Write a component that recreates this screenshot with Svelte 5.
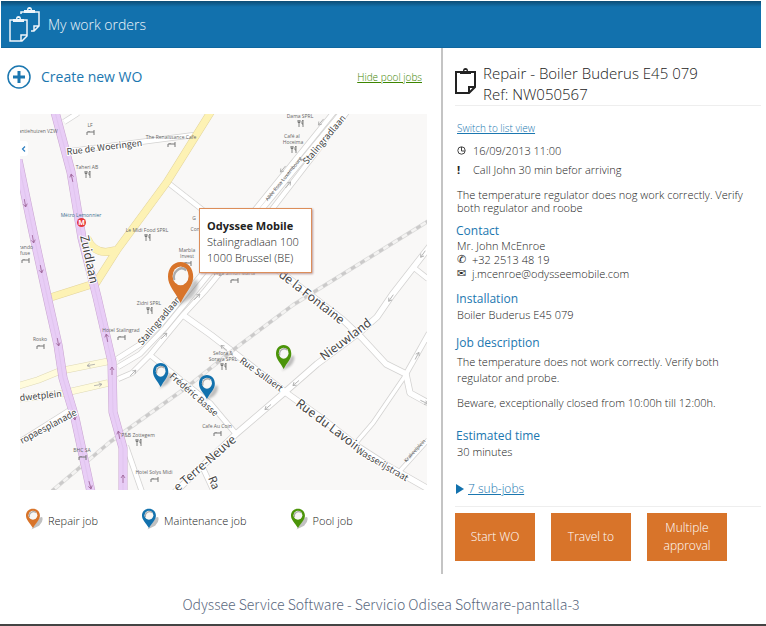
<script>
  const roads = [
    { w: 5, d: 'M64 122L78 113' },
    { w: 5, d: 'M71 151L194 135' },
    { w: 5, d: 'M167 182L204 211' },
    { w: 5, d: 'M117 359L139 345L160 325L250 216L334 112' },
    { w: 5, d: 'M118 367L140 354L165 328L258 214L342 112' },
    { w: 5, d: 'M118 379L132 373L150 355L183 315L205 291L270 212L347 112' },
    { w: 5, d: 'M150 355L210 403L236 434' },
    { w: 6, d: 'M183 315L211 335L285 392L320 417L357 446L388 466L430 490' },
    { w: 6, d: 'M173 494L236 434L285 392L317 364L360 332L377 317L392 295L430 246' },
    { w: 6, d: 'M270 264L343 320L362 338L386 364L406 374L410 393L430 404' },
    { w: 5, d: 'M406 374L429 333' },
    { w: 4, d: 'M405 376L373 423L355 444' },
    { w: 4, d: 'M399 472L428 440' },
    { w: 5, d: 'M413 267L428 279' },
    { w: 5, d: 'M126 446L142 492' },
    { w: 5, d: 'M202 466L214 492' },
    { w: 4, d: 'M20 441L69 410' },
  ];
  const yellow = 'M212 110L167 182L117 250L96 283L52 297M87 238Q93 252 106 252L117 250';
  const pale = 'M18 386L38 380L60 371L110 361M18 399L60 394L108 383';
  const purple = [
    'M18 160L33 232L49 305L58 345L63 378L75 418L91 492',
    'M55 112L71 172L82 238L97 297L112 362L113 412L123 448L123 492',
  ];
  const rail = 'M430 220L293 305L237 347L187 387L110 442L52 491';
  const arrows = [
    [25, 203, 170], [33, 239, 170], [41, 269, 170], [72, 178, -12], [58, 342, 170], [74, 416, 165],
    [90, 485, 165], [107, 338, -10], [112, 371, 0], [119, 435, -10], [123, 479, 0],
    [91, 365, -100], [98, 385, 80], [133, 373, 45], [164, 336, 45], [197, 297, 45],
    [283, 169, -140], [288, 185, 40], [321, 122, -140], [391, 298, -145], [423, 254, -145],
    [296, 383, -130], [268, 407, -130], [417, 356, 28], [224, 348, -50], [424, 402, 115],
  ];
  const places = [
    [38, 133, 'antiehuizen VZW', ''], [90, 127, 'LF', 'bed'], [171, 139, 'The Renaissance Cafe', 'bed'],
    [87, 169, 'Taheri AB', 'food'], [147, 232, 'Le Midi Food SPRL', 'food'], [187, 252, 'Marbla', ''],
    [187, 258, 'Invest', 'bed'], [26, 249, 'rando', ''], [25, 255, 'fuse', 'bed'], [149, 305, 'Zidni SPRL', 'food'],
    [121, 332, 'Hotel Stalingrad', 'bed'], [40, 341, 'Rosko', 'bed'], [300, 118, 'Dama SPRL', 'food'],
    [292, 138, 'Café al', ''], [293, 144, 'Hoceima', 'food'], [234, 275, 'Vega Simon Maria', 'bed'],
    [223, 355, 'Sefora &', ''], [223, 361, 'Soraya SPRL', 'food'], [217, 428, 'Cafe Au Coin', 'bed'],
    [138, 437, 'P&B Zottegem', 'food'], [82, 452, 'BHC SA', 'bed'], [154, 474, 'Hotel Solys Midi', 'bed'],
    [194, 220, 'G', ''], [196, 231, 'Com', ''],
  ];
  const streets = [
    [67, 155, -7, 9, 'Rue de Woeringen'], [80, 236, 78, 12, 'Zuidlaan'], [307, 165, -50, 9, 'Stalingradlaan'],
    [142, 346, -50, 9, 'Stalingradlaan'], [278, 276, 38, 12, 'de la Fontaine'], [324, 361, -37, 12, 'Nieuwland'],
    [239, 362, 36, 9, 'Rue Sallaert'], [295, 405, 37, 12, 'Rue du Lavoir'], [355, 452, 30, 9, 'Wasserijstraat'],
    [178, 492, -41, 12, 'e Terre-Neuve'], [169, 377, 41, 9, 'Frédéric Basse'], [20, 401, -6, 9, 'dwetplein'],
    [22, 444, -28, 9, 'ropaesplanade'], [208, 478, 68, 11, 'Ra'],
  ];
  const legend = [
    ['Repair job', '#d8742a'], ['Maintenance job', '#1271ad'], ['Pool job', '#4b9409'],
  ];
</script>

{#snippet pin(color)}
  <path class="pin-shadow" d="M7 27L15 16Q18 10 21 11Q23 16 17 22Z" />
  <path d="M9 0C3.500 0 0 4 0 9C0 14.500 5 18 9 25C13 18 18 14.500 18 9C18 4 14.500 0 9 0Z" fill={color} />
  <circle cx="9" cy="8.500" r="5.700" fill="#f8f7f5" />
  <path d="M4.500 11A5.500 5.500 0 0 1 13 5" fill="none" stroke="#aaa" stroke-width="1.500" />
{/snippet}

{#snippet clip()}
  <path d="M6 4H1V25H14L20 19V4H15M14 25V19H20" fill="none" stroke="currentColor" stroke-width="2" />
  <path d="M5 6V3H8Q8 0 10.500 0T13 3H16V6ZM9.500 2V3H11.500V2Z" fill="currentColor" fill-rule="evenodd" />
{/snippet}

<main>
  <header>
    <svg width="32" height="36" viewBox="0 0 32 36" aria-hidden="true">
      <path d="M12 7V5H17M24 5H30V19L25 24H22M25 24V19H30" fill="none" stroke="currentColor" stroke-width="1.500" />
      <path d="M15 6V3H18Q18 0 20.500 0T23 3H26V6ZM19.500 2V3H21.500V2Z" fill="currentColor" fill-rule="evenodd" />
      <g transform="translate(0 9)">
        <path d="M6 4H1V25H13L18 20V4H14M12 25V19H18" fill="none" stroke="currentColor" stroke-width="1.500" />
        <path d="M4 6V3H7Q7 0 9.500 0T12 3H15V6ZM8.500 2V3H10.500V2Z" fill="currentColor" fill-rule="evenodd" />
      </g>
    </svg>
    <h1>My work orders</h1>
  </header>

  <div class="columns">
    <section class="left">
      <div class="toolbar">
        <button class="create">
          <svg width="24" height="24" viewBox="0 0 24 24" aria-hidden="true">
            <circle cx="12" cy="12" r="11" fill="none" stroke="currentColor" stroke-width="1.500" />
            <path d="M12 6V18M6 12H18" stroke="currentColor" stroke-width="3" />
          </svg>
          Create new WO
        </button>
        <a class="hide" href="#pool">Hide pool jobs</a>
      </div>

      <div class="map">
        <svg class="map-art" viewBox="20 114 407 376" role="img" aria-label="Map">
          <rect x="20" y="114" width="407" height="376" fill="#f9f8f7" />
          <g fill="none" stroke-linejoin="round">
            {#each roads as r}<path d={r.d} stroke="#d3d2d1" stroke-width={r.w + 1} />{/each}
            {#each roads as r}<path d={r.d} stroke="#fff" stroke-width={r.w - 0.5} />{/each}
            <path d={rail} stroke="#dcdcdb" stroke-width="4" />
            <path d={rail} stroke="#f4f3f2" stroke-width="2.500" />
            <path d={rail} stroke="#cbcaca" stroke-width="3" stroke-dasharray="5 6" />
            <path d={pale} stroke="#dfd9b6" stroke-width="7" />
            <path d={pale} stroke="#fffbdc" stroke-width="6" />
            <path d={yellow} stroke="#e3d49c" stroke-width="8" />
            <path d={yellow} stroke="#fdf2b4" stroke-width="7" />
            {#each purple as d}
              <path {d} stroke="#c9a6d0" stroke-width="9" />
              <path {d} stroke="#e8cdf6" stroke-width="8" />
              <path {d} stroke="#d9bde6" stroke-width="0.500" />
            {/each}
            {#each arrows as [x, y, r], i}
              <path transform="translate({x} {y}) rotate({r})" d="M0 4V-4M-2 -1L0 -4L2 -1" stroke={i < 11 ? '#9d6598' : '#aaa'} stroke-width="0.800" />
            {/each}
          </g>
          {#each places as [x, y, label, kind]}
            <text class="place" {x} {y}>{label}</text>
            {#if kind === 'food'}
              <path transform="translate({x - 2} {y + 2})" d="M0 0V2.500H2V0M1 0V7M5 7V0Q3.500 1 4 4H5" fill="none" stroke="#666" stroke-width="0.800" />
            {:else if kind === 'bed'}
              <path transform="translate({x - 3} {y + 3})" d="M0 5V2H7M7 5V0M2 2V1" fill="none" stroke="#777" stroke-width="1" />
            {/if}
          {/each}
          {#each streets as [x, y, r, size, label]}
            <text class="street" transform="translate({x} {y}) rotate({r})" font-size={size}>{label}</text>
          {/each}
          <text class="place dark" transform="translate(285 180) rotate(-51)">Allée Rosa Luxembourg</text>
          <text class="place dark" transform="translate(416 452) rotate(-47)">Krakeelplein</text>
          <text class="place metro" x="81" y="217">Métro Lemonnier</text>
          <circle cx="81.500" cy="222.500" r="4.500" fill="#e5383b" />
          <text class="m" x="81.500" y="225">M</text>
          <path d="M20 141H25Q28 141 28 144V153Q28 156 25 156H20Z" fill="#fff" />
          <path d="M25 146.500L22.500 149L25 151.500" fill="none" stroke="#2a7ec0" stroke-width="1.200" />
          <g transform="translate(168 262) scale(1.400 1.640)">{@render pin('#d8742a')}</g>
          <g transform="translate(153 363) scale(0.850 0.960)">{@render pin('#1271ad')}</g>
          <g transform="translate(199 375) scale(0.880 0.960)">{@render pin('#1271ad')}</g>
          <g transform="translate(276 345) scale(0.850 0.960)">{@render pin('#4b9409')}</g>
        </svg>
        <div class="tooltip">
          <strong>Odyssee Mobile</strong>
          <span>Stalingradlaan 100</span>
          <span>1000 Brussel (BE)</span>
        </div>
      </div>

      <ul class="legend">
        {#each legend as [label, color]}
          <li>
            <svg width="17" height="23" viewBox="0 0 22 28" aria-hidden="true">{@render pin(color)}</svg>
            {label}
          </li>
        {/each}
      </ul>
    </section>

    <section class="right">
      <div class="title">
        <svg width="21" height="27" viewBox="0 0 21 27" aria-hidden="true">{@render clip()}</svg>
        <h2>Repair - Boiler Buderus E45 079<br />Ref: NW050567</h2>
      </div>
      <a class="switch" href="#list">Switch to list view</a>
      <div class="facts">
        <div>
          <svg width="9" height="9" viewBox="0 0 9 9" aria-hidden="true"><path d="M4.500 1V5H8M4.500 .8A3.700 3.700 0 1 0 8.200 4.500A3.700 3.700 0 0 0 4.500 .8" fill="none" stroke="#444" stroke-width="1" /></svg>
          16/09/2013 11:00
        </div>
        <div><b>!</b>Call John 30 min befor arriving</div>
      </div>
      <p class="note">The temperature regulator does nog work correctly. Verify both regulator and roobe</p>

      <h3 class="contact">Contact</h3>
      <address>
        <div>Mr. John McEnroe</div>
        <div><i>✆</i>+32 2513 48 19</div>
        <div><i>✉</i>j.mcenroe@odysseemobile.com</div>
      </address>

      <h3 class="install">Installation</h3>
      <p>Boiler Buderus E45 079</p>

      <h3 class="job">Job description</h3>
      <p class="desc">The temperature does not work correctly. Verify both regulator and probe.</p>
      <p class="beware">Beware, exceptionally closed from 10:00h till 12:00h.</p>

      <h3 class="time">Estimated time</h3>
      <p>30 minutes</p>

      <div class="sub">
        <svg width="8" height="10" viewBox="0 0 8 10" aria-hidden="true"><path d="M0 0L8 5L0 10Z" fill="#1271ad" /></svg>
        <a href="#sub">7 sub-jobs</a>
      </div>
      <div class="actions">
        <button>Start WO</button>
        <button>Travel to</button>
        <button>Multiple approval</button>
      </div>
    </section>
  </div>

  <footer>Odyssee Service Software - Servicio Odisea Software-pantalla-3</footer>
</main>

<style>
  :global(body) { margin: 0; background: #fff; }
  main { font: 300 11px/16px "Open Sans", "Noto Sans", sans-serif; color: #222; }
  h1, h2, h3, p, ul { margin: 0; padding: 0; font-weight: 300; }
  header {
    display: flex; align-items: center; gap: 7px; box-sizing: border-box; height: 47px;
    margin: 1px 5px 0 1px; padding: 2px 8px 0; color: #f0f5fa;
    background: linear-gradient(#0d4c75, #1271ad 6px); border-bottom: 1px solid #0f679f;
  }
  h1 { font-size: 14px; line-height: 20px; }
  .columns { display: grid; grid-template-columns: 443fr 318fr; margin-right: 5px; }
  .left { border-right: 2px solid #c4c4c4; }
  .toolbar { display: flex; align-items: center; justify-content: space-between; height: 58px; padding: 0 19px 0 7px; }
  button { border: 0; padding: 0; font: inherit; cursor: pointer; }
  .create { display: flex; align-items: center; gap: 10px; background: none; color: #1b77b0; font-size: 14px; font-weight: 400; }
  .hide, .switch { font-size: 10px; }
  .hide { color: #3d8500; }
  .map { position: relative; margin: 8px 14px 0 20px; }
  .map-art { display: block; width: 100%; height: auto; }
  .street { font-family: "Noto Sans CJK SC", sans-serif; font-weight: 400; fill: #444; stroke: #fff; stroke-width: 2px; paint-order: stroke; }
  .place { font: 400 5px "Open Sans", sans-serif; fill: #666; text-anchor: middle; }
  .dark { fill: #444; }
  .metro { font-size: 5px; fill: #3f7393; }
  .m { font: 700 7px "Open Sans", sans-serif; fill: #fff; text-anchor: middle; }
  .pin-shadow { fill: #777; opacity: 0.45; filter: blur(1px); }
  .tooltip {
    position: absolute; left: 44%; top: 25%; display: flex; flex-direction: column;
    padding: 9px 12px 6px 7px; background: #fff; border: 1px solid #dc8e5a; box-shadow: 1px 1px 2px #b99;
  }
  .tooltip strong { font-weight: 700; }
  .legend { display: flex; gap: 44px; margin: 16px 26px 0; list-style: none; }
  .legend li { display: flex; align-items: center; gap: 5px; height: 30px; }
  .legend svg { margin-top: -4px; }
  .right { display: flex; flex-direction: column; padding: 15px 0 13px 12px; }
  .title { display: flex; align-items: center; gap: 7px; border-bottom: 1px solid #eee; }
  .title svg { margin-top: -6px; }
  h2 { font-size: 15px; line-height: 21px; }
  .switch { align-self: flex-start; margin: 14px 2px 0; color: #1b77b0; }
  .facts { margin: 5px 2px 0; line-height: 19px; }
  .facts div { display: flex; align-items: center; gap: 7px; }
  .facts b { width: 9px; font-weight: 700; }
  p, address { margin: 0 2px; font-style: normal; }
  .note { margin-top: 9px; line-height: 13px; }
  h3 { margin: 0 1px; font-size: 12px; font-weight: 400; color: #1b77b0; }
  .contact { margin-top: 9px; }
  address { line-height: 14px; }
  address div { display: flex; }
  i { width: 15px; font: 11px/14px "DejaVu Sans", sans-serif; }
  .install { margin-top: 10px; }
  .job { margin-top: 12px; }
  .desc { margin-top: 3px; padding-right: 24px; }
  .beware { margin-top: 9px; }
  .time { margin-top: 17px; }
  .sub { display: flex; align-items: center; gap: 4px; margin: 21px 1px 0; padding-bottom: 9px; font-size: 12px; }
  .sub a { color: #1b77b0; }
  .actions { display: flex; gap: 16px; padding-top: 6px; border-top: 1px solid #eee; }
  .actions button { width: 80px; height: 48px; padding: 0 10px; background: #d8742a; color: #fff; font-size: 12px; line-height: 18px; }
  footer {
    padding: 18px 4px 8px 0; text-align: center; color: #5b6980; border-bottom: 2px solid #444;
    font: 300 14px/24px "Noto Sans CJK SC Light", "Noto Sans CJK SC", sans-serif;
  }
</style>
